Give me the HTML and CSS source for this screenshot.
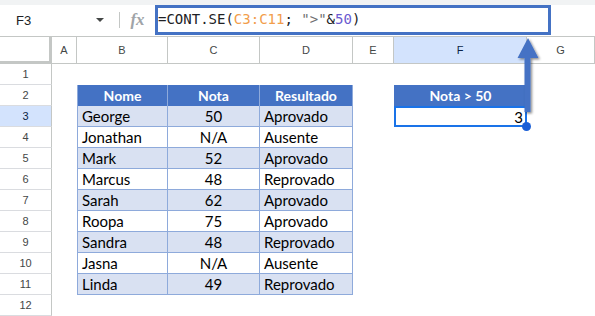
FILE: index.html
```html
<!DOCTYPE html>
<html lang="pt">
  <head>
    <meta charset="UTF-8" />
    <title>CONT.SE</title>
    <link rel="stylesheet" href="styles.css">
  </head>
  <body>
    <div class="app">
      <div class="toolbar">
        <div class="namebox">
          <span>F3</span>
          <span class="caret"></span>
        </div>
        <span class="sep"></span>
        <span class="fx">fx</span>
        <div class="formula">=CONT.SE(<span class="rng">C3:C11</span>; <span class="str">"&gt;"</span>&amp;<span class="num">50</span>)</div>
      </div>

      <div class="sheet">
        <!-- column headers -->
        <div class="corner"></div>
        <div class="colhead">A</div>
        <div class="colhead">B</div>
        <div class="colhead">C</div>
        <div class="colhead">D</div>
        <div class="colhead">E</div>
        <div class="colhead active">F</div>
        <div class="colhead">G</div>

        <!-- row headers -->
        <div class="rowhead r1">1</div>
        <div class="rowhead r2">2</div>
        <div class="rowhead r3 active">3</div>
        <div class="rowhead r4">4</div>
        <div class="rowhead r5">5</div>
        <div class="rowhead r6">6</div>
        <div class="rowhead r7">7</div>
        <div class="rowhead r8">8</div>
        <div class="rowhead r9">9</div>
        <div class="rowhead r10">10</div>
        <div class="rowhead r11">11</div>
        <div class="rowhead r12">12</div>

        <!-- B2:D11 -->
        <div class="grades">
          <div class="th first">Nome</div>
          <div class="th">Nota</div>
          <div class="th">Resultado</div>

          <div class="td first band">George</div><div class="td mid band">50</div><div class="td band">Aprovado</div>
          <div class="td first">Jonathan</div><div class="td mid">N/A</div><div class="td">Ausente</div>
          <div class="td first band">Mark</div><div class="td mid band">52</div><div class="td band">Aprovado</div>
          <div class="td first">Marcus</div><div class="td mid">48</div><div class="td">Reprovado</div>
          <div class="td first band">Sarah</div><div class="td mid band">62</div><div class="td band">Aprovado</div>
          <div class="td first">Roopa</div><div class="td mid">75</div><div class="td">Aprovado</div>
          <div class="td first band">Sandra</div><div class="td mid band">48</div><div class="td band">Reprovado</div>
          <div class="td first">Jasna</div><div class="td mid">N/A</div><div class="td">Ausente</div>
          <div class="td first band">Linda</div><div class="td mid band">49</div><div class="td band">Reprovado</div>
        </div>

        <!-- F2:F3 -->
        <div class="result">
          <div class="th">Nota &gt; 50</div>
          <div class="selected">3<span class="handle"></span></div>
        </div>
      </div>

      <svg class="arrow" width="40" height="90" viewBox="0 0 40 90">
        <defs>
          <filter id="shadow" x="-50%" y="-20%" width="200%" height="140%">
            <feDropShadow dx="1.5" dy="1.5" stdDeviation="1" flood-color="#000" flood-opacity="0.45"/>
          </filter>
        </defs>
        <path d="M18 8 L28.5 28 L20.5 28 L20.5 82 L14.5 82 L14.5 28 L7.5 28 Z" fill="#4472c4" filter="url(#shadow)"/>
      </svg>
    </div>
  </body>
</html>
```

FILE: styles.css
```css
* {
  box-sizing: border-box;
}

body {
  margin: 0;
  background-color: #fff;
  font-family: "Liberation Sans", Arial, sans-serif;
  color: #202124;
}

.app {
  position: relative;
  width: 595px;
  height: 316px;
  overflow: hidden;
}

/* Formula bar */
.toolbar {
  display: flex;
  align-items: flex-start;
  height: 37px;
  padding-top: 5px;
  border-bottom: 1px solid #c4c7c5;
  background: linear-gradient(#f1f3f4 5px, #fff 5px);
}

.namebox {
  display: flex;
  align-items: center;
  justify-content: space-between;
  width: 119px;
  height: 30px;
  padding: 0 15px 0 16px;
  font-size: 13px;
  color: #202124;
}

.caret {
  width: 0;
  height: 0;
  border-left: 4px solid transparent;
  border-right: 4px solid transparent;
  border-top: 4px solid #444746;
}

.sep {
  width: 1px;
  height: 16px;
  margin-top: 7px;
  background-color: #c4c7c5;
}

.fx {
  width: 35px;
  height: 30px;
  line-height: 30px;
  text-align: center;
  font-family: "Liberation Serif", serif;
  font-style: italic;
  font-weight: bold;
  font-size: 17px;
  color: #a0a4a8;
}

.formula {
  width: 396px;
  height: 30px;
  border: 3px solid #4472c4;
  padding-left: 0;
  line-height: 23px;
  font-family: "DejaVu Sans Mono", monospace;
  font-size: 14px;
  color: #202124;
  white-space: nowrap;
}

.rng {
  color: #f29d4b;
}

.str {
  color: #6e6e6e;
}

.num {
  color: #6a5ad0;
}

/* Sheet grid */
.sheet {
  display: grid;
  grid-template-columns: 52px 25px 91px 92px 93px 41px 133px 1fr;
  grid-template-rows: 27px repeat(12, 21px);
}

.corner {
  border-right: 3px solid #c4c7c5;
  border-bottom: 3px solid #c4c7c5;
}

.colhead {
  display: flex;
  align-items: center;
  justify-content: center;
  border-right: 1px solid #c4c7c5;
  border-bottom: 1px solid #c4c7c5;
  font-size: 11px;
  color: #444746;
}

.rowhead {
  grid-column: 1;
  display: flex;
  align-items: center;
  justify-content: center;
  border-right: 1px solid #c4c7c5;
  border-bottom: 1px solid #dadce0;
  font-size: 11px;
  color: #444746;
}

.active {
  background-color: #d3e3fd;
  color: #0b1f45;
}

.r1 { grid-row: 2; }
.r2 { grid-row: 3; }
.r3 { grid-row: 4; }
.r4 { grid-row: 5; }
.r5 { grid-row: 6; }
.r6 { grid-row: 7; }
.r7 { grid-row: 8; }
.r8 { grid-row: 9; }
.r9 { grid-row: 10; }
.r10 { grid-row: 11; }
.r11 { grid-row: 12; }
.r12 { grid-row: 13; }

/* Data table */
.grades {
  grid-column: 3 / 6;
  grid-row: 3 / 13;
  display: grid;
  grid-template-columns: 91px 92px 93px;
  grid-auto-rows: 21px;
  font-family: Lato, "Open Sans", sans-serif;
  font-size: 15px;
}

.th {
  display: flex;
  align-items: center;
  justify-content: center;
  background-color: #4472c4;
  border-right: 1px solid #8eaadb;
  color: #fff;
  font-family: Lato, "Open Sans", sans-serif;
  font-weight: bold;
  font-size: 14px;
}

.th.first {
  border-left: 1px solid #8eaadb;
}

.td {
  padding: 0 4px;
  line-height: 21px;
  border-right: 1px solid #8eaadb;
  border-bottom: 1px solid #8eaadb;
  color: #000;
  white-space: nowrap;
}

.td.first {
  border-left: 1px solid #8eaadb;
}

.td.mid {
  text-align: center;
}

.band {
  background-color: #d9e1f2;
}

.result {
  grid-column: 7;
  grid-row: 3 / 5;
  display: grid;
  grid-template-rows: 21px 21px;
  font-family: Lato, "Open Sans", sans-serif;
}

.result .th {
  border-right: none;
}

.selected {
  position: relative;
  border: 2px solid #1a73e8;
  padding-right: 2px;
  text-align: right;
  font-size: 15px;
  line-height: 19px;
  color: #000;
}

.handle {
  position: absolute;
  right: -6px;
  bottom: -6px;
  width: 9px;
  height: 9px;
  border-radius: 50%;
  background-color: #1a5fd6;
}

.arrow {
  position: absolute;
  left: 510px;
  top: 30px;
}
```
